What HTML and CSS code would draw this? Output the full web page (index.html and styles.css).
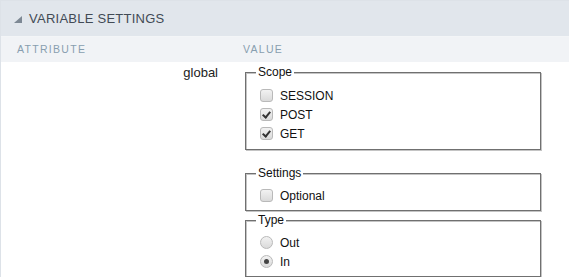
FILE: index.html
```html
<!DOCTYPE html>
<html lang="en">
<head>
<meta charset="UTF-8">
<meta name="viewport" content="width=device-width, initial-scale=1.0">
<title>Variable Settings</title>
<link rel="stylesheet" href="styles.css">
</head>
<body>
<div class="panel">
    <div class="panel-title">
        <svg class="caret" width="8" height="7" viewBox="0 0 8 7"><polygon points="8,0 8,7 0,7" fill="#7d8894"/></svg>
        <span>VARIABLE SETTINGS</span>
    </div>
    <div class="cols head">
        <div class="col-attr">ATTRIBUTE</div>
        <div class="col-value">VALUE</div>
    </div>
    <div class="cols row">
        <div class="attr">global</div>
        <div class="value">
            <fieldset class="scope">
                <legend>Scope</legend>
                <label class="opt"><input type="checkbox"> SESSION</label>
                <label class="opt"><input type="checkbox" checked> POST</label>
                <label class="opt"><input type="checkbox" checked> GET</label>
            </fieldset>
            <fieldset>
                <legend>Settings</legend>
                <label class="opt"><input type="checkbox"> Optional</label>
            </fieldset>
            <fieldset class="type">
                <legend>Type</legend>
                <label class="opt"><input type="radio" name="type"> Out</label>
                <label class="opt"><input type="radio" name="type" checked> In</label>
            </fieldset>
        </div>
    </div>
</div>
</body>
</html>
```
FILE: styles.css
```css
body {
    margin: 0;
    background-color: #fff;
    font-family: "Liberation Sans", Arial, sans-serif;
    color: #333;
}

.panel {
    border-top: 1px solid #dde2e8;
    border-left: 1px solid #dde2e8;
}

.panel-title {
    display: flex;
    align-items: center;
    height: 35px;
    padding-left: 13px;
    background-color: #e1e6ec;
    border-bottom: 1px solid #f3f5f7;
    color: #414a55;
    font-size: 13px;
    letter-spacing: 0.25px;
}

.caret {
    margin: 2px 7px 0 0;
}

.cols {
    display: grid;
    grid-template-columns: 242px 300px;
}

.head {
    height: 25px;
    line-height: 25px;
    background-color: #f1f3f6;
    color: #889eaf;
    font-size: 10.5px;
    letter-spacing: 1.3px;
}

.col-attr {
    padding-left: 16px;
}

.row {
    padding-top: 3px;
    font-size: 12px;
}

.attr {
    text-align: right;
    padding: 1px 25px 0 0;
    line-height: 14px;
    font-size: 13px;
    color: #222;
}

fieldset {
    margin: 0 2px;
    padding: 6px 9px 5px 10px;
    border: 1px solid #707070;
    box-shadow: 1px 1px 0 #c4c4c4, inset 1px 1px 0 #c4c4c4;
}

.scope {
    margin-bottom: 16px;
    padding-top: 7px;
    padding-bottom: 6px;
}

.type {
    margin-top: 2px;
}

legend {
    padding: 0 2px;
    line-height: 14px;
    background-color: #fff;
    color: #111;
}

.opt {
    display: flex;
    align-items: center;
    height: 19px;
    color: #111;
}

.opt input {
    appearance: none;
    position: relative;
    width: 13px;
    height: 13px;
    margin: 0 7px 0 4px;
    border: 1px solid #b9b9b9;
    border-radius: 3px;
    background: linear-gradient(#f2f2f2, #dadada);
}

.opt input[type="radio"] {
    border-radius: 50%;
}

.opt input[type="checkbox"]:checked::after {
    content: "";
    position: absolute;
    left: 3px;
    top: 1px;
    width: 3px;
    height: 6px;
    border-right: 2px solid #333;
    border-bottom: 2px solid #333;
    transform: rotate(40deg);
}

.opt input[type="radio"]:checked::after {
    content: "";
    position: absolute;
    left: 3px;
    top: 3px;
    width: 5px;
    height: 5px;
    border-radius: 50%;
    background-color: #444;
}
```
